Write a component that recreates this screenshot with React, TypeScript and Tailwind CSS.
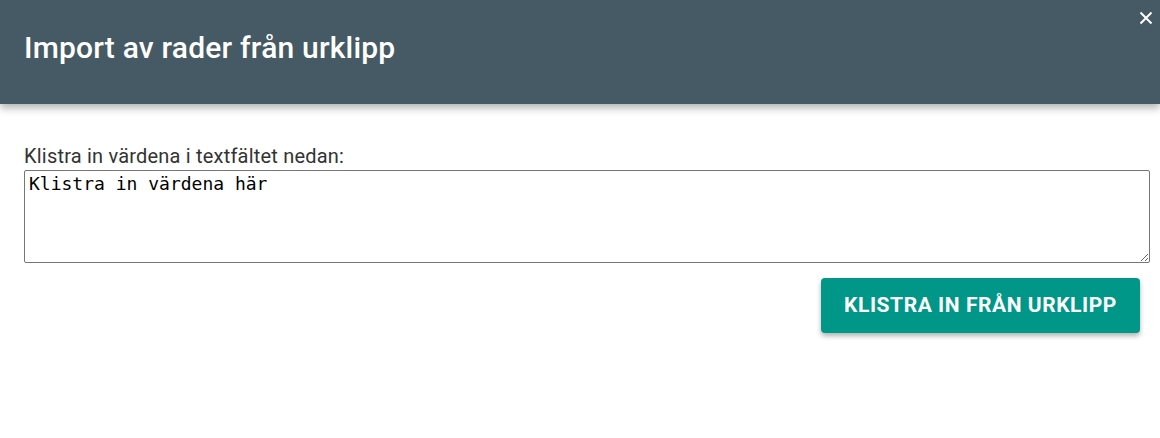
import React from "react";

export default function App() {
  return (
    <div className="w-[1160px] h-[438px] bg-white overflow-hidden relative" style={{ fontFamily: "Roboto, 'Noto Sans', sans-serif" }}>
      <div className="relative z-10 h-[104px] bg-[#455a64] flex items-center pl-[24px] shadow-[0_4px_8px_rgba(0,0,0,0.3)]">
        <h1 className="text-white text-[30px] font-medium leading-none tracking-[0.2px] -mt-[8px]" style={{ fontFamily: "Roboto, sans-serif" }}>
          Import av rader från urklipp
        </h1>
        <button className="absolute right-[6px] top-[10px] w-[16px] h-[16px] flex items-center justify-center text-white">
          <svg width="14" height="14" viewBox="0 0 14 14" fill="none" stroke="white" strokeWidth="2">
            <path d="M1.5 1.5 L12.5 12.5 M12.5 1.5 L1.5 12.5" />
          </svg>
        </button>
      </div>
      <div className="px-[24px] pt-[40px]">
        <label className="block text-[20px] tracking-[0.2px] leading-[24px] text-[#333333]">
          Klistra in värdena i textfältet nedan:
        </label>
        <textarea
          className="block w-[1126px] h-[93px] mt-[2px] border border-[#767676] rounded-[2px] px-[4px] py-[2px] text-[18px] leading-[22px] text-black outline-none resize-y"
          style={{ fontFamily: "'DejaVu Sans Mono', monospace" }}
          defaultValue="Klistra in värdena här"
        />
        <div className="flex justify-end mt-[15px] mr-[-4px]">
          <button className="h-[55px] w-[319px] rounded-[4px] bg-[#009688] text-white text-[21px] font-bold tracking-[0.55px] uppercase shadow-[0_3px_5px_rgba(0,0,0,0.3)]">
            Klistra in från urklipp
          </button>
        </div>
      </div>
    </div>
  );
}
